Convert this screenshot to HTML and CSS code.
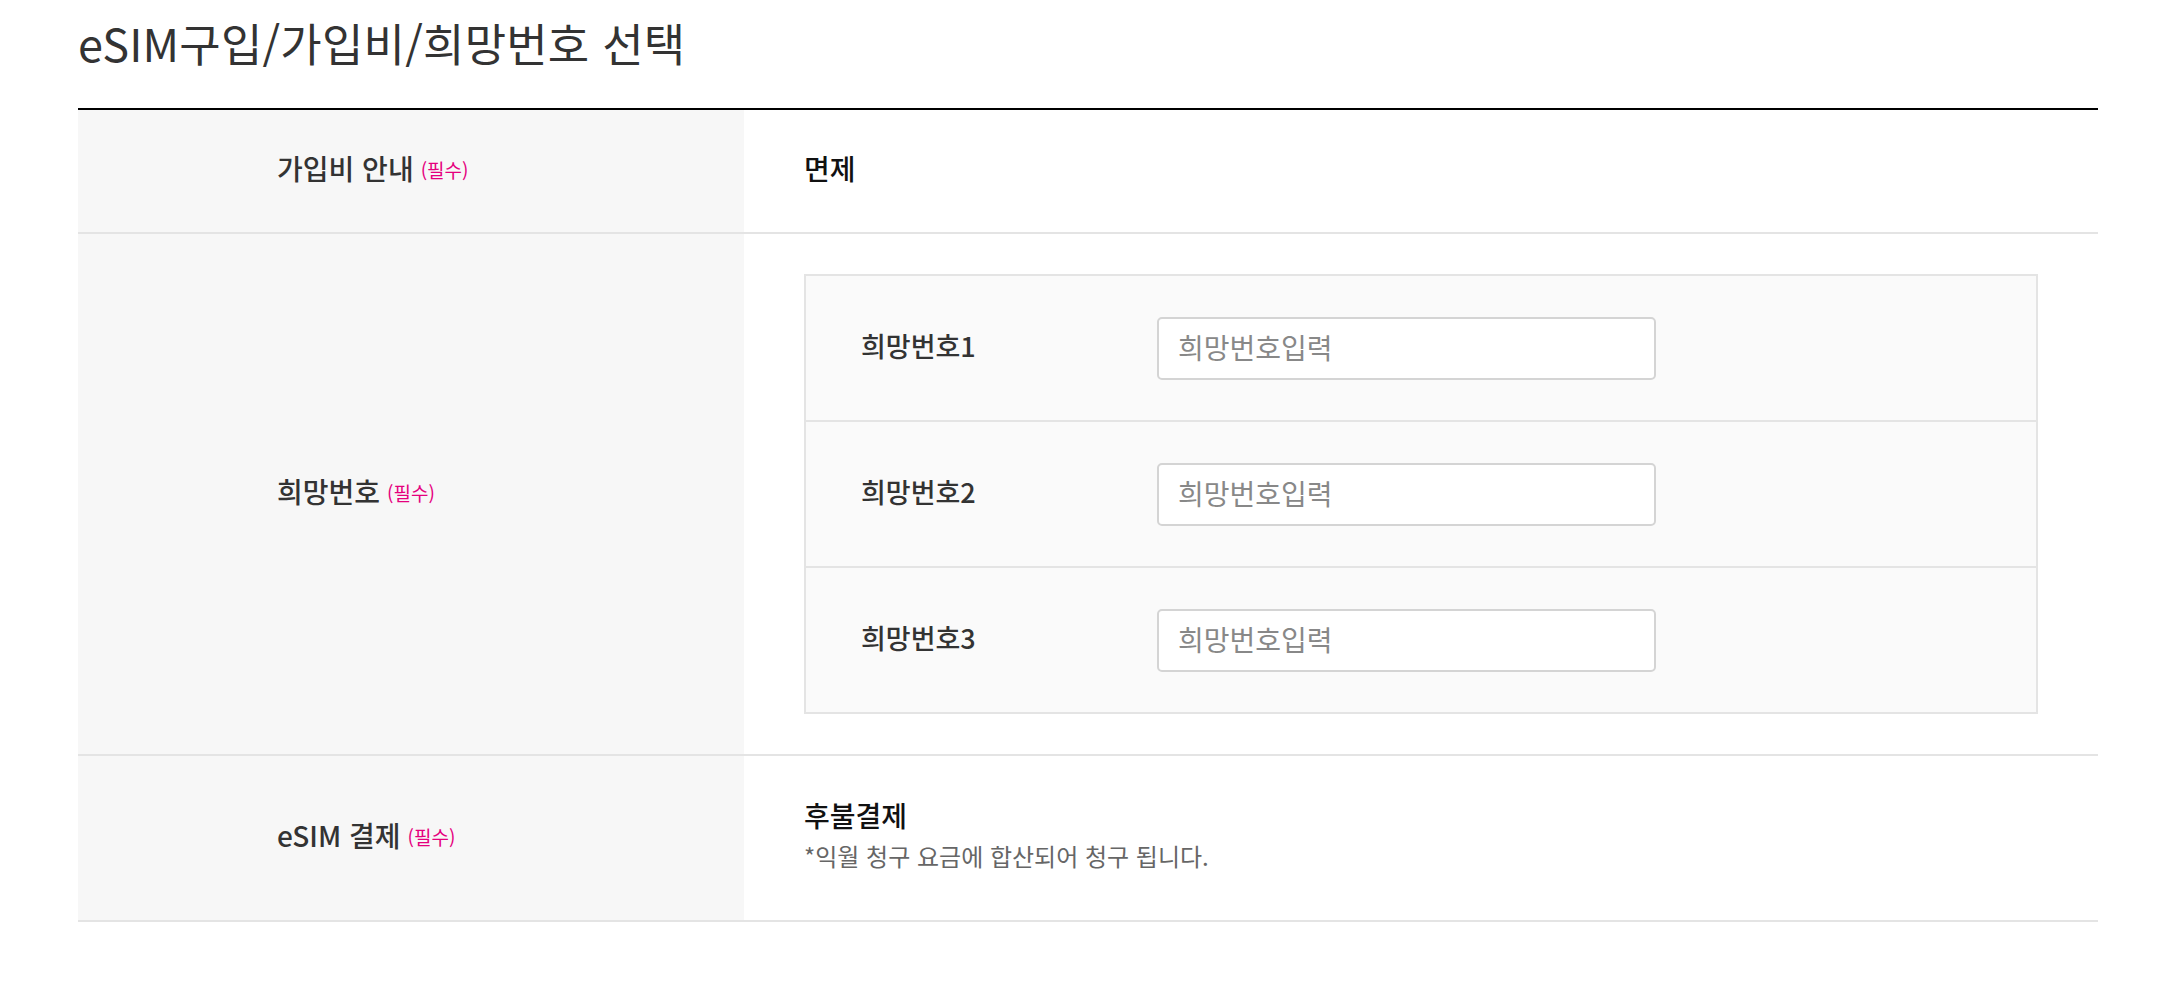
FILE: index.html
```html
<!DOCTYPE html>
<html lang="ko">
<head>
<meta charset="utf-8">
<title>eSIM구입/가입비/희망번호 선택</title>
<link rel="stylesheet" href="styles.css">
</head>
<body>
<div class="page">
  <h2 class="title">eSIM구입/가입비/희망번호 선택</h2>
  <div class="table">
    <div class="row">
      <div class="th"><span class="label">가입비 안내</span><span class="req">(필수)</span></div>
      <div class="td"><span class="value">면제</span></div>
    </div>
    <div class="row">
      <div class="th"><span class="label">희망번호</span><span class="req">(필수)</span></div>
      <div class="td td-box">
        <div class="box">
          <div class="box-row">
            <span class="box-label">희망번호1</span>
            <input class="inp" type="text" placeholder="희망번호입력">
          </div>
          <div class="box-row">
            <span class="box-label">희망번호2</span>
            <input class="inp" type="text" placeholder="희망번호입력">
          </div>
          <div class="box-row">
            <span class="box-label">희망번호3</span>
            <input class="inp" type="text" placeholder="희망번호입력">
          </div>
        </div>
      </div>
    </div>
    <div class="row">
      <div class="th"><span class="label">eSIM 결제</span><span class="req">(필수)</span></div>
      <div class="td td-stack">
        <span class="value">후불결제</span>
        <span class="note">*익월 청구 요금에 합산되어 청구 됩니다.</span>
      </div>
    </div>
  </div>
</div>
</body>
</html>
```
FILE: styles.css
```css
* { box-sizing: border-box; }
html, body {
  margin: 0;
  padding: 0;
  background: #fff;
}
body {
  font-family: "Noto Sans CJK KR", "Noto Sans", sans-serif;
  color: #333;
}
.page {
  padding: 0 72px 0 78px;
  width: 2170px;
}
.title {
  margin: 0;
  padding-top: 14px;
  height: 108px;
  font-size: 45px;
  font-weight: 400;
  line-height: 58px;
  color: #333;
  letter-spacing: 0.2px;
}
.table {
  width: 2020px;
  border-top: 2px solid #000;
}
.row {
  display: grid;
  grid-template-columns: 666px 1fr;
  border-bottom: 2px solid #e4e4e4;
}
.th {
  background: #f7f7f7;
  display: flex;
  align-items: center;
  padding-left: 199px;
  padding-bottom: 6px;
  min-height: 122px;
}
.label {
  font-size: 28px;
  font-weight: 500;
  color: #333;
}
.req {
  font-size: 19px;
  color: #e5007e;
  margin-left: 7px;
  margin-top: 3px;
}
.td {
  display: flex;
  align-items: center;
  padding: 0 60px 6px;
}
.value {
  font-size: 28px;
  font-weight: 500;
  color: #111;
}
.td-box {
  padding: 40px 60px;
}
.box {
  width: 100%;
  border: 2px solid #e4e4e4;
  background: #fafafa;
}
.box-row {
  display: flex;
  align-items: center;
  height: 146px;
  padding-left: 55px;
  border-bottom: 2px solid #e4e4e4;
}
.box-row:last-child {
  height: 144px;
  border-bottom: 0;
}
.box-label {
  width: 296px;
  font-size: 27px;
  font-weight: 500;
  color: #333;
  padding-bottom: 5px;
}
.inp {
  width: 499px;
  height: 63px;
  border: 2px solid #d4d4d4;
  border-radius: 5px;
  background: #fff;
  padding: 0 0 3px 19px;
  font-family: "Noto Sans CJK KR", "Noto Sans", sans-serif;
  font-size: 28px;
  color: #333;
  outline: none;
}
.inp::placeholder {
  color: #888;
}
.td-stack {
  flex-direction: column;
  align-items: flex-start;
  justify-content: center;
  min-height: 164px;
  padding-bottom: 8px;
}
.td-stack .value {
  line-height: 38px;
}
.note {
  font-size: 24px;
  color: #666;
  line-height: 34px;
  margin-top: 5px;
}
```
